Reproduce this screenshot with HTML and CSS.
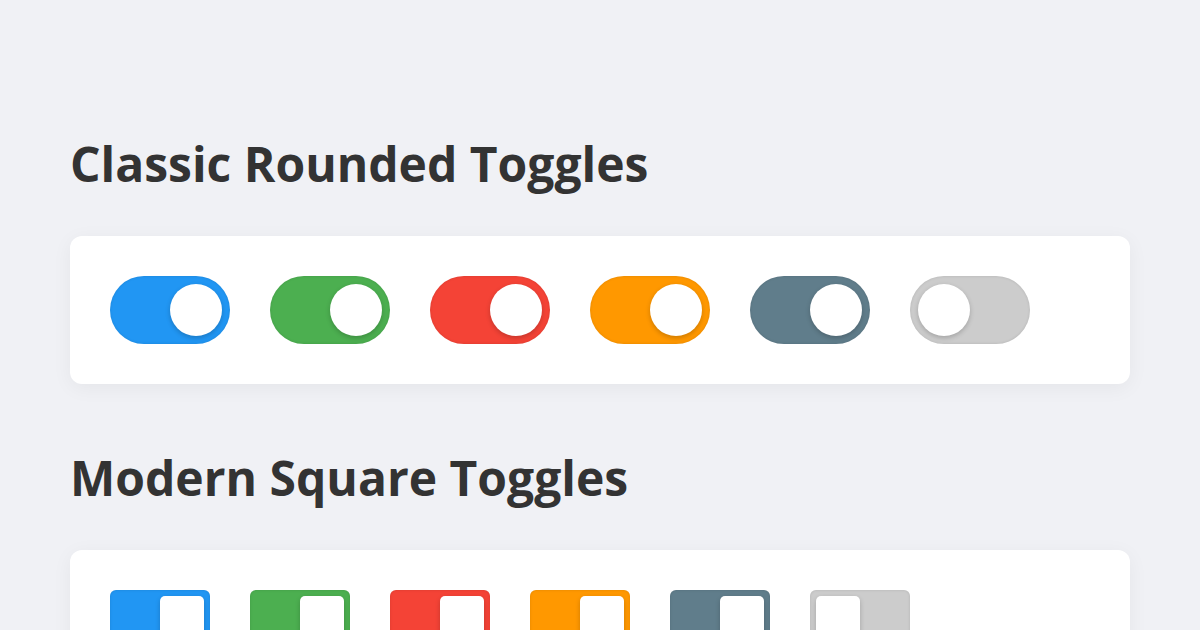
FILE: index.html
```html
<!DOCTYPE html>
<html lang="en">
<head>
<meta charset="utf-8">
<title>Toggles</title>
<link rel="stylesheet" href="styles.css">
</head>
<body>
<main class="page">
  <section class="section">
    <h2 class="title">Classic Rounded Toggles</h2>
    <div class="card">
      <span class="toggle round on blue"><span class="knob"></span></span>
      <span class="toggle round on green"><span class="knob"></span></span>
      <span class="toggle round on red"><span class="knob"></span></span>
      <span class="toggle round on orange"><span class="knob"></span></span>
      <span class="toggle round on slate"><span class="knob"></span></span>
      <span class="toggle round off grey"><span class="knob"></span></span>
    </div>
  </section>
  <section class="section">
    <h2 class="title">Modern Square Toggles</h2>
    <div class="card">
      <span class="toggle square on blue"><span class="knob"></span></span>
      <span class="toggle square on green"><span class="knob"></span></span>
      <span class="toggle square on red"><span class="knob"></span></span>
      <span class="toggle square on orange"><span class="knob"></span></span>
      <span class="toggle square on slate"><span class="knob"></span></span>
      <span class="toggle square off grey"><span class="knob"></span></span>
    </div>
  </section>
</main>
</body>
</html>
```
FILE: styles.css
```css
html, body {
  margin: 0;
  padding: 0;
}
body {
  background: #f0f1f5;
  font-family: "Open Sans", "Noto Sans", sans-serif;
  color: #333;
}
.page {
  padding: 136px 70px 40px;
}
.section + .section {
  margin-top: 66px;
}
.title {
  margin: 0 0 44px;
  font-size: 48px;
  line-height: 56px;
  font-weight: 700;
  color: #333;
}
.card {
  background: #fff;
  border-radius: 12px;
  padding: 40px;
  display: flex;
  gap: 40px;
  box-shadow: 0 4px 20px rgba(0, 0, 0, 0.05);
}
.toggle {
  display: flex;
  align-items: flex-start;
  box-shadow: inset 0 0 3px rgba(0, 0, 0, 0.12);
}
.toggle.on { justify-content: flex-end; }
.toggle.off { justify-content: flex-start; }
.knob {
  background: #fff;
  box-shadow: 0 2px 5px rgba(0, 0, 0, 0.2);
}
.round {
  width: 120px;
  height: 68px;
  border-radius: 34px;
  padding: 8px;
  box-sizing: border-box;
}
.round .knob {
  width: 52px;
  height: 52px;
  border-radius: 50%;
}
.square {
  width: 100px;
  height: 56px;
  border-radius: 6px;
  padding: 6px;
  box-sizing: border-box;
}
.square .knob {
  width: 44px;
  height: 44px;
  border-radius: 5px;
}
.blue { background: #2196f3; }
.green { background: #4caf50; }
.red { background: #f44336; }
.orange { background: #ff9800; }
.slate { background: #607d8b; }
.grey { background: #cccccc; }
```
